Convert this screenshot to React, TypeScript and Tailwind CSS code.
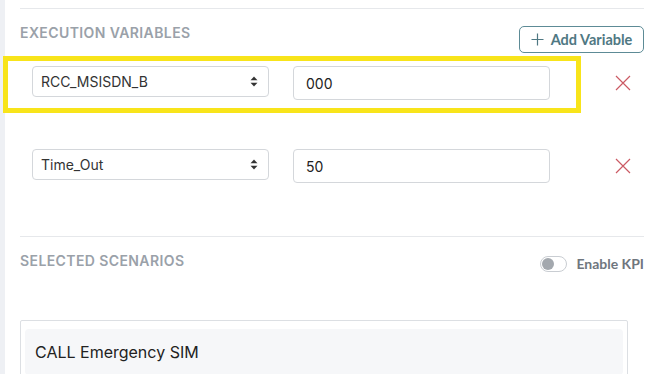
import React from 'react'

const ui = { fontFamily: 'Inter, "Liberation Sans", sans-serif' }
const soft = { fontFamily: 'Lato, "Open Sans", sans-serif' }

function SectionHeading({ children }: { children: React.ReactNode }) {
  return (
    <h2 className="pt-[16px] text-[14px] font-semibold leading-[16px] uppercase tracking-[0.4px] text-[#9aa1a9]" style={ui}>
      {children}
    </h2>
  )
}

function SortArrows() {
  return (
    <svg width="8" height="11" viewBox="0 0 8 11" className="text-[#333]">
      <path d="M4 0.5 L7.5 4.3 H0.5 Z" fill="currentColor" />
      <path d="M4 10.5 L7.5 6.7 H0.5 Z" fill="currentColor" />
    </svg>
  )
}

function RemoveIcon() {
  return (
    <svg width="16" height="16" viewBox="0 0 16 16">
      <path d="M1 1 L15 15 M15 1 L1 15" stroke="#cb5a64" strokeWidth="1.2" fill="none" />
    </svg>
  )
}

function VariableRow({ name, value }: { name: string; value: string }) {
  return (
    <div className="flex items-start pl-[12px]">
      <div className="flex h-[31px] w-[237px] items-center justify-between rounded-[4px] border border-[#d4d7db] pl-[8px] pr-[10px] text-[14px] text-[#333]" style={ui}>
        <span>{name}</span>
        <SortArrows />
      </div>
      <div className="ml-[24px] flex h-[34px] w-[257px] items-center rounded-[4px] border border-[#d4d7db] pl-[12px] text-[14px] text-[#222]" style={ui}>
        {value}
      </div>
      <div className="ml-[65px] flex h-[34px] items-center">
        <RemoveIcon />
      </div>
    </div>
  )
}

export default function App() {
  return (
    <div className="relative flex h-[374px] w-[653px] overflow-hidden bg-white">
      <div className="w-[5px] shrink-0 bg-[#eef0f4]" />
      <main className="flex flex-1 flex-col pl-[15px] pr-[9px]">
        <div className="mt-[8px] border-t border-[#e6e8eb]" />

        <div className="flex items-start justify-between">
          <SectionHeading>Execution Variables</SectionHeading>
          <button
            className="mt-[17px] flex h-[27px] w-[125px] items-center justify-center gap-[7px] rounded-[5px] border border-[#5d8b96] text-[14.5px] font-bold text-[#4f7883]"
            style={soft}
          >
            <svg width="13" height="13" viewBox="0 0 13 13">
              <path d="M6.5 0.5 V12.5 M0.5 6.5 H12.5" stroke="currentColor" strokeWidth="1.2" fill="none" />
            </svg>
            Add Variable
          </button>
        </div>

        <div className="mt-[13px] flex flex-col gap-[49px]">
          <VariableRow name="RCC_MSISDN_B" value="000" />
          <VariableRow name="Time_Out" value="50" />
        </div>

        <div className="mt-[53px] border-t border-[#e6e8eb]" />

        <div className="flex items-start justify-between">
          <SectionHeading>Selected Scenarios</SectionHeading>
          <div className="mt-[19px] flex items-center gap-[9px]">
            <div className="flex h-[16px] w-[27px] items-center rounded-full border border-[#c9cdd2] px-[1px]">
              <div className="h-[12px] w-[12px] rounded-full bg-[#a3a8ae]" />
            </div>
            <span className="text-[14px] font-bold leading-[16px] text-[#6f767e]" style={soft}>Enable KPI</span>
          </div>
        </div>

        <article className="mt-[48px] mr-[16px] flex-1 rounded-t-[2px] border border-[#dcdfe3] px-[4px] pt-[8px]">
          <div className="flex h-[46px] items-center rounded-[4px] bg-[#f6f7f9] pl-[10px] text-[16px] text-[#222]" style={ui}>
            CALL Emergency SIM
          </div>
        </article>
      </main>

      <div className="pointer-events-none absolute left-[3px] top-[56px] h-[57px] w-[578px] border-[5px] border-[#f8e41a]" />
    </div>
  )
}
